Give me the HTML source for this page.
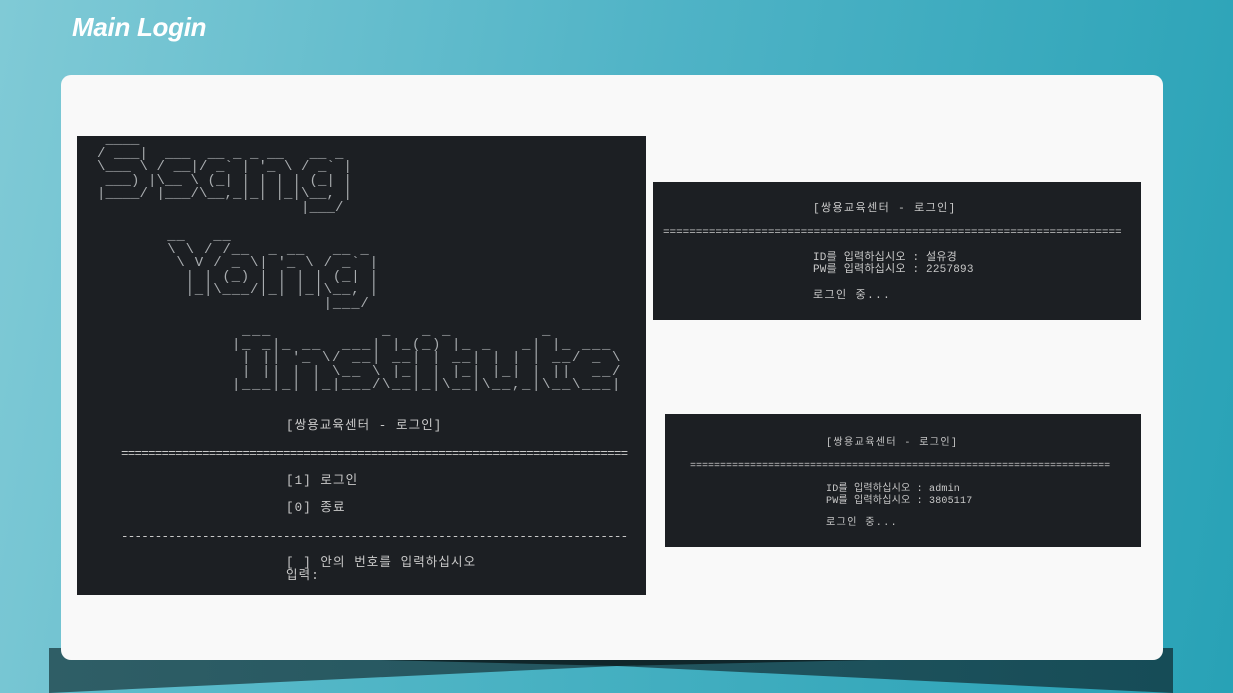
<!DOCTYPE html>
<html><head><meta charset="utf-8"><style>
*{margin:0;padding:0;box-sizing:border-box}
body{width:1233px;height:693px;overflow:hidden;position:relative;background:linear-gradient(100deg,#80cad6 0%,#4fb3c6 50%,#28a2b6 100%);font-family:"Liberation Sans","Noto Sans CJK KR",sans-serif}
h1{position:absolute;left:72px;top:12px;color:#fff;font-style:italic;font-weight:bold;font-size:26px;letter-spacing:-0.3px}
.card{position:absolute;left:61px;top:75px;width:1102px;height:585px;background:#f9f9f9;border-radius:10px}
.term{position:absolute;background:#1c1f23}
pre,.t{position:absolute;font-family:"Liberation Mono","Noto Sans CJK KR",monospace;white-space:pre;color:#c9c9c9}
pre.art{font-size:14px;line-height:13.5px;color:#a9adb0}
.t{font-size:12.5px;line-height:13px}
.k{letter-spacing:1.1px}
.s{font-size:11px;line-height:12px}
.xs{font-size:10px;line-height:12px}
</style></head><body>
<h1>Main Login</h1>
<svg style="position:absolute;left:0;top:0" width="1233" height="693">
<defs><linearGradient id="g" x1="0" x2="1"><stop offset="0" stop-color="#2f5e66"/><stop offset="1" stop-color="#164c57"/></linearGradient>
<linearGradient id="b" x1="0" x2="1"><stop offset="0" stop-color="#5fbdcc"/><stop offset="1" stop-color="#2aa2b6"/></linearGradient></defs>
<rect x="49" y="648" width="1124" height="45" fill="url(#g)"/>
<polygon points="380,660 617,666 870,660" fill="#10262a"/>
<polygon points="49,693 617,666 1173,693" fill="url(#b)"/>
</svg>
<div class="card"></div>
<div class="term" style="left:77px;top:136px;width:569px;height:459px"></div>
<pre class="art" style="left:97px;top:134px;letter-spacing:0.1px"> ____
/ ___|  ___  __ _ _ __   __ _
\___ \ / __|/ _` | '_ \ / _` |
 ___) |\__ \ (_| | | | | (_| |
|____/ |___/\__,_|_| |_|\__, |
                        |___/</pre>
<pre class="art" style="left:158px;top:230px;letter-spacing:0.8px"> __   __
 \ \ / /__  _ __   __ _
  \ V / _ \| '_ \ / _` |
   | | (_) | | | | (_| |
   |_|\___/|_| |_|\__, |
                  |___/</pre>
<pre class="art" style="left:232px;top:325px;letter-spacing:1.6px"> ___           _   _ _         _
|_ _|_ __  ___| |_(_) |_ _   _| |_ ___
 | || '_ \/ __| __| | __| | | | __/ _ \
 | || | | \__ \ |_| | |_| |_| | ||  __/
|___|_| |_|___/\__|_|\__|\__,_|\__\___|</pre>
<div class="t k" style="left:286px;top:420px">[쌍용교육센터 - 로그인]</div>
<div class="t" style="left:121px;top:448px;letter-spacing:-0.75px">===========================================================================</div>
<div class="t k" style="left:286px;top:475px">[1] 로그인</div>
<div class="t k" style="left:286px;top:502px">[0] 종료</div>
<div class="t" style="left:121px;top:531px;letter-spacing:-0.75px">---------------------------------------------------------------------------</div>
<div class="t k" style="left:286px;top:557px">[ ] 안의 번호를 입력하십시오</div>
<div class="t k" style="left:286px;top:570px">입력:</div>

<div class="term" style="left:653px;top:182px;width:488px;height:138px"></div>
<div class="t s" style="left:813px;top:203px;letter-spacing:1.4px">[쌍용교육센터 - 로그인]</div>
<div class="t s" style="left:663px;top:227px;letter-spacing:-0.05px">======================================================================</div>
<div class="t s" style="left:813px;top:252px;letter-spacing:0.2px">ID를 입력하십시오 : 설유경
PW를 입력하십시오 : 2257893</div>
<div class="t s" style="left:813px;top:290px;letter-spacing:1.4px">로그인 중...</div>

<div class="term" style="left:665px;top:414px;width:476px;height:133px"></div>
<div class="t xs" style="left:826px;top:438px;letter-spacing:1.4px">[쌍용교육센터 - 로그인]</div>
<div class="t xs" style="left:690px;top:461px;letter-spacing:0px">======================================================================</div>
<div class="t xs" style="left:826px;top:484px;letter-spacing:0.2px">ID를 입력하십시오 : admin
PW를 입력하십시오 : 3805117</div>
<div class="t xs" style="left:826px;top:518px;letter-spacing:1.4px">로그인 중...</div>
</body></html>
